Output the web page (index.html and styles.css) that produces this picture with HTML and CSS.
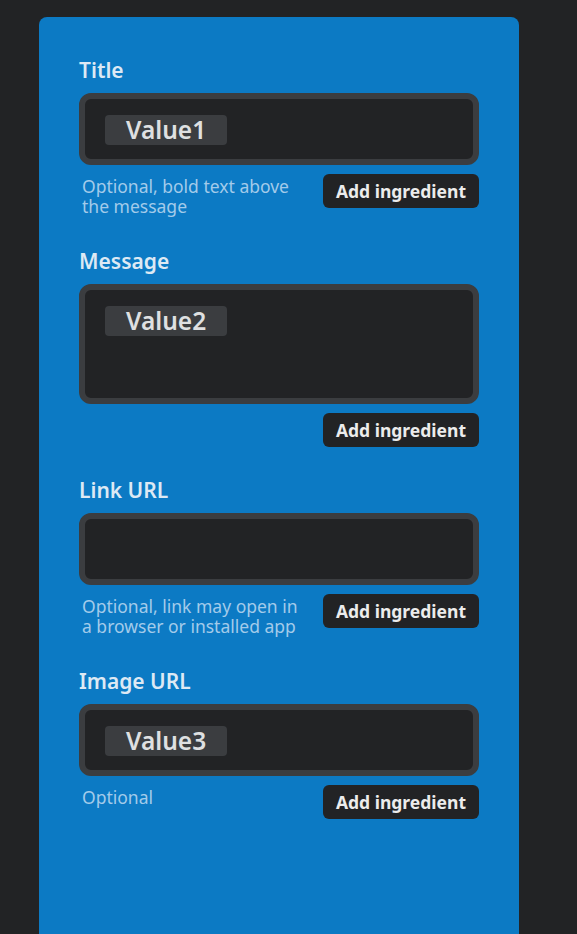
FILE: index.html
```
<!DOCTYPE html>
<html>
<head>
<meta charset="utf-8">
<link rel="stylesheet" href="styles.css">
</head>
<body>
<div class="panel">
  <div class="field">
    <div class="label">Title</div>
    <div class="box"><span class="pill">Value1</span></div>
    <div class="row">
      <div class="help">Optional, bold text above the message</div>
      <button class="add">Add ingredient</button>
    </div>
  </div>
  <div class="field">
    <div class="label">Message</div>
    <div class="box tall"><span class="pill">Value2</span></div>
    <div class="row">
      <div class="help"></div>
      <button class="add">Add ingredient</button>
    </div>
  </div>
  <div class="field">
    <div class="label">Link URL</div>
    <div class="box"></div>
    <div class="row">
      <div class="help">Optional, link may open in a browser or installed app</div>
      <button class="add">Add ingredient</button>
    </div>
  </div>
  <div class="field">
    <div class="label">Image URL</div>
    <div class="box"><span class="pill">Value3</span></div>
    <div class="row">
      <div class="help">Optional</div>
      <button class="add">Add ingredient</button>
    </div>
  </div>
</div>
</body>
</html>
```

FILE: styles.css
```
html, body {
  margin: 0;
  padding: 0;
  background: #222325;
  height: 100%;
  overflow: hidden;
}
body {
  font-family: "Noto Sans", Lato, sans-serif;
  padding: 17px 0 0 39px;
  box-sizing: border-box;
}
.panel {
  width: 480px;
  height: 917px;
  background: #0c7ac4;
  border-radius: 8px 8px 0 0;
  padding: 38px 40px 0;
  box-sizing: border-box;
  display: flex;
  flex-direction: column;
  gap: 28px;
}
.field {
  display: flex;
  flex-direction: column;
}
.label {
  color: #dde9f4;
  font-weight: 600;
  font-size: 21px;
  line-height: 28px;
  padding-top: 1px;
  margin-bottom: 9px;
}
.box {
  height: 72px;
  box-sizing: border-box;
  background: #222325;
  border: 6px solid #3b3d40;
  border-radius: 12px;
  padding: 16px 20px;
}
.box.tall {
  height: 120px;
}
.pill {
  display: inline-block;
  background: #3b3d40;
  color: #dfe0e1;
  font-weight: 600;
  font-size: 24.5px;
  line-height: 30px;
  height: 30px;
  padding: 0 21px;
  border-radius: 4px;
}
.row {
  display: flex;
  justify-content: space-between;
  align-items: flex-start;
  margin-top: 9px;
}
.help {
  color: #a3cbea;
  font-size: 17.5px;
  line-height: 20px;
  width: 220px;
  padding: 2px 0 2px 3px;
}
.help:empty {
  padding: 0;
}
.add {
  background: #222325;
  color: #ececec;
  font-family: inherit;
  font-weight: 700;
  font-size: 17.5px;
  height: 34px;
  padding: 0 13px;
  border: none;
  border-radius: 6px;
}
```
